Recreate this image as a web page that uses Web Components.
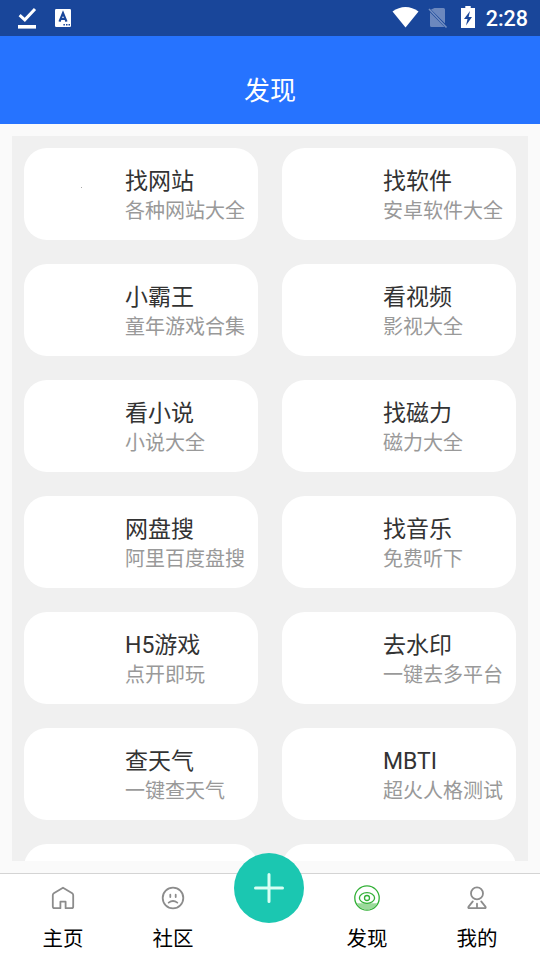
<!DOCTYPE html>
<html lang="zh-CN">
<head>
<meta charset="utf-8">
<title>发现</title>
<style>
html, body { margin: 0; height: 100%; overflow: hidden; }
body { font-family: Roboto, "Noto Sans CJK SC", sans-serif; background: #fafafa; }
</style>
</head>
<body>
<discover-app></discover-app>
<script>
class StatusBar extends HTMLElement {
  constructor() {
    super();
    this.attachShadow({ mode: 'open' }).innerHTML = `
      <style>
        :host { display: flex; align-items: center; justify-content: space-between; height: 36px; flex: none; background: #19469a; color: #fff; }
        svg { display: block; }
        .time { width: 57px; box-sizing: border-box; padding-top: 2px; text-align: right; padding-right: 12px; font-size: 21.5px; line-height: 34px; font-weight: 500; }
        .right { display: flex; }
      </style>
      <svg width="90" height="36" viewBox="0 0 90 36">
        <path d="M19.6 15.2l5.2 4.6L35 9" fill="none" stroke="#fff" stroke-width="3"/>
        <path d="M18 25h18v3.6H18z" fill="#fff"/>
        <rect x="55" y="9" width="16" height="18" rx="1.2" fill="#fff"/>
        <path d="M59.5 21.7L63 13.2l3.5 8.500M60.700 19h4.600" fill="none" stroke="#19469a" stroke-width="2.2"/>
        <path d="M63.4 24h1.5v1.5h-1.5zM66 24h1.5v1.5H66zM68.500 24H70v1.500h-1.500z" fill="#19469a"/>
      </svg>
      <div class="right">
        <svg width="93" height="36" viewBox="390 0 93 36">
          <path d="M392.500 11.600C400.500 5.500 410.500 5.500 418.500 11.600L405.500 27.500z" fill="#fff"/>
          <path d="M434.500 8H443.500Q445 8 445 9.500V23.500L431 9.600zM430 12.300V25.500Q430 27 431.500 27H444.500z" fill="#fff" opacity=".36"/>
          <path d="M429 9L446.500 27.400" stroke="#fff" stroke-width="1.5" opacity=".4"/>
          <path d="M465.300 6h5.400v2H475v20H461V8h4.300z" fill="#fff"/>
          <path d="M470 11L464 19H467.500L466 25.500L472 17H468.600z" fill="#19469a"/>
        </svg>
        <div class="time">2:28</div>
      </div>`;
  }
}
customElements.define('status-bar', StatusBar);

class TitleBar extends HTMLElement {
  constructor() {
    super();
    this.attachShadow({ mode: 'open' }).innerHTML = `
      <style>
        :host { display: block; height: 88px; flex: none; box-sizing: border-box; padding-top: 36px; background: #2673ff; color: #fff; text-align: center; font-size: 26px; line-height: 38px; }
      </style><slot></slot>`;
  }
}
customElements.define('title-bar', TitleBar);

class EntryCard extends HTMLElement {
  constructor() {
    super();
    this.attachShadow({ mode: 'open' }).innerHTML = `
      <style>
        :host { display: flex; align-items: flex-start; height: 92px; box-sizing: border-box; padding-top: 18px; background: #fff; border-radius: 23px; white-space: nowrap; }
        .icon { width: 101px; height: 44px; flex: none; display: grid; place-items: center; }
        .title { font-size: 23px; line-height: 32px; color: #333; }
        .sub { font-size: 20px; line-height: 26px; color: #999; }
        ::slotted(i) { width: 1px; height: 1px; background: #aaa; translate: 7px -1px; }
      </style>
      <div class="icon"><slot name="icon"></slot></div>
      <div><div class="title"><slot name="title"></slot></div><div class="sub"><slot></slot></div></div>`;
  }
}
customElements.define('entry-card', EntryCard);

class EntryGrid extends HTMLElement {
  constructor() {
    super();
    this.attachShadow({ mode: 'open' }).innerHTML = `
      <style>
        :host { display: grid; grid-template-columns: 234px 234px; grid-auto-rows: 92px; gap: 24px; align-content: start; box-sizing: border-box; height: 725px; flex: none; margin: 12px 12px 12px; padding: 12px; overflow: hidden; background: #f0f0f0; }
      </style><slot></slot>`;
  }
}
customElements.define('entry-grid', EntryGrid);

class TabItem extends HTMLElement {
  constructor() {
    super();
    this.attachShadow({ mode: 'open' }).innerHTML = `
      <style>
        :host { display: flex; flex-direction: column; align-items: center; color: #000; font-size: 20.5px; line-height: 30px; padding-top: 10px; }
        ::slotted(svg) { display: block; width: 28px; height: 28px; margin-bottom: 12px; fill: none; stroke: #8c8c8c; stroke-width: 1.8; stroke-linejoin: round; stroke-linecap: round; }
      </style><slot name="icon"></slot><span><slot></slot></span>`;
  }
}
customElements.define('tab-item', TabItem);

class AddButton extends HTMLElement {
  constructor() {
    super();
    this.attachShadow({ mode: 'open' }).innerHTML = `
      <style>
        :host { display: block; width: 70px; height: 70px; margin: -21px 0 0 6.4px; border-radius: 50%; background: #1bc7b1; }
        svg { display: block; }
      </style>
      <svg width="70" height="70" viewBox="0 0 70 70"><path d="M21.500 35H48.500M35 21.500V48.500" stroke="#d9fff4" stroke-width="3" stroke-linecap="round"/></svg>`;
  }
}
customElements.define('add-button', AddButton);

class TabBar extends HTMLElement {
  constructor() {
    super();
    this.attachShadow({ mode: 'open' }).innerHTML = `
      <style>
        :host { display: grid; grid-template-columns: 110px 110px 84px 110px 110px; height: 87px; flex: none; box-sizing: border-box; padding: 0 8px; border-top: 1px solid #d4d4d4; background: #fff; }
      </style><slot></slot>`;
  }
}
customElements.define('tab-bar', TabBar);

class DiscoverApp extends HTMLElement {
  constructor() {
    super();
    const entries = [
      ['找网站', '各种网站大全'], ['找软件', '安卓软件大全'],
      ['小霸王', '童年游戏合集'], ['看视频', '影视大全'],
      ['看小说', '小说大全'], ['找磁力', '磁力大全'],
      ['网盘搜', '阿里百度盘搜'], ['找音乐', '免费听下'],
      ['H5游戏', '点开即玩'], ['去水印', '一键去多平台'],
      ['查天气', '一键查天气'], ['MBTI', '超火人格测试'],
      ['', ''], ['', '']
    ];
    const cards = entries.map(([title, sub], i) =>
      `<entry-card>${i === 0 ? '<i slot="icon"></i>' : ''}<span slot="title">${title}</span>${sub}</entry-card>`).join('');
    this.attachShadow({ mode: 'open' }).innerHTML = `
      <style>:host { display: flex; flex-direction: column; width: 540px; height: 960px; background: #fafafa; }</style>
      <status-bar></status-bar>
      <title-bar>发现</title-bar>
      <entry-grid>${cards}</entry-grid>
      <tab-bar>
        <tab-item><svg slot="icon" viewBox="0 0 28 28"><path d="M14 3.700L23.200 9.300Q24.200 10 24.200 11.200V22.500Q24.200 24.200 22.500 24.200H16.600V17.700H11.400V24.200H5.500Q3.800 24.200 3.800 22.500V11.200Q3.800 10 4.800 9.300z"/></svg>主页</tab-item>
        <tab-item><svg slot="icon" viewBox="0 0 28 28"><circle cx="14" cy="14" r="10.300"/><path d="M11.300 10.700v2.400M16.700 10.700v2.400M9.700 18.600Q14 15.400 18.300 18.600"/></svg>社区</tab-item>
        <add-button></add-button>
        <tab-item><svg slot="icon" viewBox="0 0 28 28"><path d="M3.500 19.200H24.500A12 12 0 0 1 3.500 19.200z" fill="#9bd99b" stroke="none"/><g style="stroke:#32b036;stroke-width:1.300"><circle cx="14" cy="14" r="12.200"/><ellipse cx="14" cy="14" rx="7.600" ry="5.300"/><circle cx="14" cy="14" r="2.500"/></g></svg>发现</tab-item>
        <tab-item><svg slot="icon" viewBox="0 0 28 28"><circle cx="14" cy="9.400" r="6"/><path d="M9.800 17.400L5.600 22.600Q4.600 24.200 6.500 24.200H21.500Q23.400 24.200 22.400 22.600L18.200 17.400M14 19.700V24"/></svg>我的</tab-item>
      </tab-bar>`;
  }
}
customElements.define('discover-app', DiscoverApp);
</script>
</body>
</html>
